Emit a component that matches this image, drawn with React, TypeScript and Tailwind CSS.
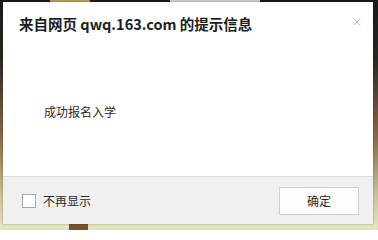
import { X } from 'lucide-react';

const font = { fontFamily: '"Noto Sans CJK SC", "Liberation Sans", sans-serif' };

export default function App() {
  return (
    <div
      className="relative w-[378px] h-[230px] overflow-hidden pt-[2px] pl-[3px] bg-[linear-gradient(180deg,#1b1a18_0%,#2a2620_25%,#8a6a4a_60%,#c9c29a_85%,#e6e4c2_100%)]"
      style={font}
    >
      {/* bits of the page behind the dialog */}
      <div className="absolute left-[50px] top-0 w-[40px] h-[3px] bg-[#b99a5a]" />
      <div className="absolute left-[170px] top-0 w-[90px] h-[3px] bg-[#cfcfcf]" />
      <div className="absolute left-0 bottom-0 w-full h-[6px] bg-[#e4e2bf]" />
      <div className="absolute left-[69px] bottom-0 w-[19px] h-[6px] bg-[#7a5230]" />

      <div className="relative flex flex-col w-[370px] h-[222px] bg-white shadow-[0_0_2px_rgba(0,0,0,0.35)]">
        <div className="flex items-start justify-between h-[40px] pl-[16px] pr-[10px] pt-[13px]">
          <h1 className="text-[14.5px] leading-[18px] font-bold text-[#1e1e1e]">
            来自网页 qwq.163.com 的提示信息
          </h1>
          <X className="mt-[1px] size-[12px] text-[#8a8a8a]" strokeWidth={1.2} />
        </div>

        <div className="flex-1 pl-[41px] pt-[62px]">
          <p className="text-[12px] leading-[16px] text-[#2a2a2a]">成功报名入学</p>
        </div>

        <div className="flex items-center justify-between h-[48px] border-t border-[#dedede] bg-[#f0f0f0] pl-[19px] pr-[14px]">
          <label className="flex items-center gap-[7px] text-[12px] text-[#2a2a2a]">
            <span className="size-[14px] border border-[#a9a9a9] bg-white" />
            不再显示
          </label>
          <button className="w-[80px] h-[28px] border border-[#cfcfcf] bg-[#fdfdfd] text-[12px] text-[#2a2a2a]">
            确定
          </button>
        </div>
      </div>
    </div>
  );
}
